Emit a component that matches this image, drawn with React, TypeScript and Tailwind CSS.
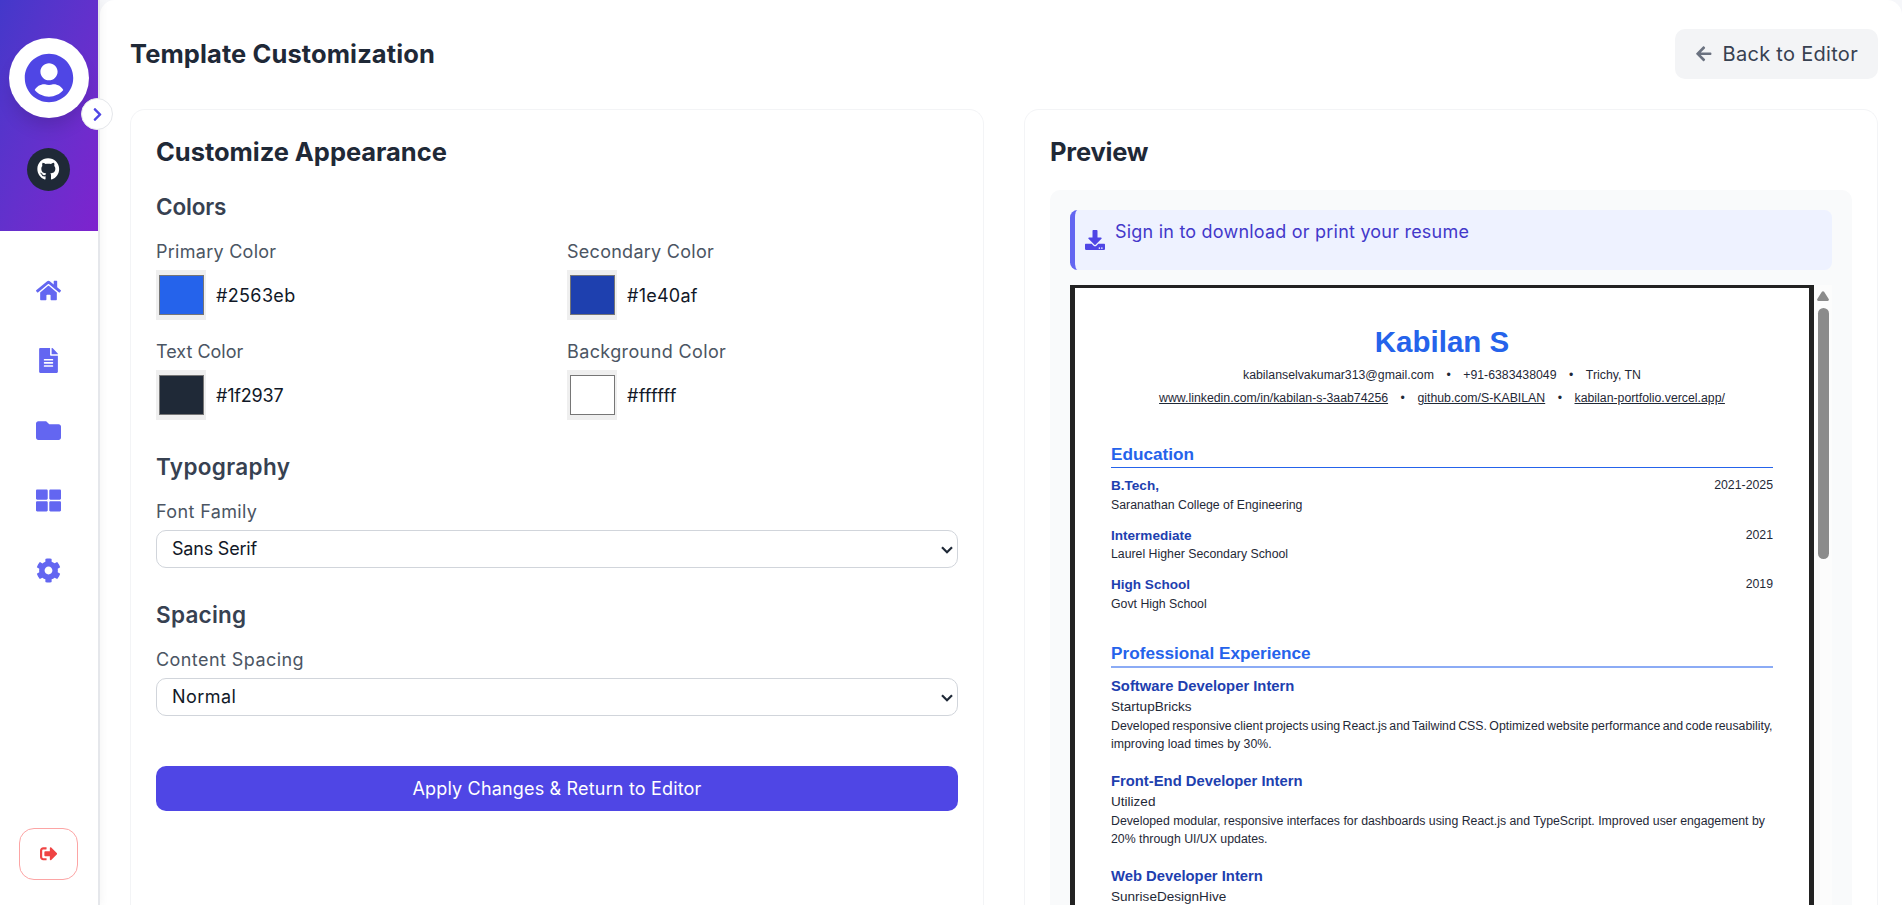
import type { ReactNode } from "react";
import {
  FaArrowLeft,
  FaChevronRight,
  FaCog,
  FaDownload,
  FaFileAlt,
  FaFolder,
  FaGithub,
  FaHome,
  FaSignOutAlt,
  FaThLarge,
  FaUserCircle,
} from "react-icons/fa";

const navIcons = [FaHome, FaFileAlt, FaFolder, FaThLarge, FaCog];

const swatches = [
  { label: "Primary Color", value: "#2563eb", fill: "bg-[#2563eb]", lt: "tracking-[0.27px]", vt: "tracking-[0.35px]" },
  { label: "Secondary Color", value: "#1e40af", fill: "bg-[#1e40af]", lt: "tracking-[0.27px]", vt: "tracking-[0.25px]" },
  { label: "Text Color", value: "#1f2937", fill: "bg-[#1f2937]", lt: "tracking-[0px]", vt: "tracking-[-0.2px]" },
  { label: "Background Color", value: "#ffffff", fill: "bg-white", lt: "tracking-[0.38px]", vt: "tracking-[0.25px]" },
];

const education = [
  { title: "B.Tech,", school: "Saranathan College of Engineering", date: "2021-2025", row: "h-[19px] leading-[19px]" },
  { title: "Intermediate", school: "Laurel Higher Secondary School", date: "2021", row: "h-[18px] leading-[16px]" },
  { title: "High School", school: "Govt High School", date: "2019", row: "h-[19px] leading-[19px]" },
];

const jobs = [
  {
    title: "Software Developer Intern",
    company: "StartupBricks",
    lines: [
      "Developed responsive client projects using React.js and Tailwind CSS. Optimized website performance and code reusability,",
      "improving load times by 30%.",
    ],
    spacing: "[word-spacing:-1px]",
  },
  {
    title: "Front-End Developer Intern",
    company: "Utilized",
    lines: [
      "Developed modular, responsive interfaces for dashboards using React.js and TypeScript. Improved user engagement by",
      "20% through UI/UX updates.",
    ],
    spacing: "",
  },
  { title: "Web Developer Intern", company: "SunriseDesignHive", lines: [], spacing: "" },
];

function Sidebar() {
  return (
    <aside className="relative z-10 flex w-[98px] shrink-0 flex-col items-center bg-white shadow-[2px_0_0_#e5e7eb,4px_0_8px_rgba(0,0,0,0.04)]">
      <div className="flex h-[231px] w-full flex-col items-center bg-linear-to-br from-[#4338ca] to-[#7e22ce] pt-[38px]">
        <div className="flex size-20 items-center justify-center rounded-full bg-white shadow-[0_12px_18px_-4px_rgba(0,0,0,0.14)]">
          <FaUserCircle className="size-[50px] text-[#4f46e5]" />
        </div>
        <div className="mt-[30px] mr-[1px] flex size-[43px] items-center justify-center rounded-full bg-[#1f2937]">
          <FaGithub className="size-[22.5px] text-white" />
        </div>
      </div>
      <button className="absolute top-[98px] left-[81px] flex size-8 items-center justify-center rounded-full border border-[#e5e7eb] bg-white">
        <FaChevronRight className="ml-px size-[15px] text-[#4f46e5]" />
      </button>
      <nav className="mt-[46.5px] mr-[1px] flex flex-col gap-[45px]">
        {navIcons.map((Icon, i) => (
          <Icon key={i} className="size-[25px] text-[#6366f1]" />
        ))}
      </nav>
      <button className="mt-auto mr-[1px] mb-[25px] flex h-[52px] w-[59px] items-center justify-center rounded-[15px] border border-[#fca5a5]">
        <FaSignOutAlt className="size-[17.5px] text-[#ef4444]" />
      </button>
    </aside>
  );
}

function SelectBox({ value, track }: { value: string; track: string }) {
  return (
    <div className="flex h-[38px] items-center justify-between rounded-[10px] border border-[#d1d5db] bg-white pr-[4px] pl-[15px] text-[18px] text-[#111827]">
      <span className={`leading-[36px] ${track}`}>{value}</span>
      <svg className="mt-px h-[8px] w-[12px]" viewBox="0 0 12 8" fill="none" stroke="#1f2937" strokeWidth="2.2">
        <path d="M1 1.2 6 6.2 11 1.2" />
      </svg>
    </div>
  );
}

function SectionTitle({ children, className }: { children: ReactNode; className: string }) {
  return <h3 className={`mb-4 h-[33px] text-[22.5px] leading-[34px] font-semibold text-[#374151] ${className}`}>{children}</h3>;
}

function Separator() {
  return <span className="mx-[12.5px]">•</span>;
}

function Resume() {
  return (
    <div className="min-w-0 flex-1 border-x-[5px] border-t-[3px] border-[#222222] bg-white px-9 pt-[33px] font-['Liberation_Sans',Arial,sans-serif] text-[12.3px] text-[#1f2937]">
      <div className="text-center">
        <h1 className="h-[43px] text-[29.5px] leading-[42px] font-bold text-[#2563eb]">Kabilan S</h1>
        <div className="flex h-[23px] justify-center leading-[23px]">
          <span>kabilanselvakumar313@gmail.com</span>
          <Separator />
          <span>+91-6383438049</span>
          <Separator />
          <span>Trichy, TN</span>
        </div>
        <div className="flex h-[23px] justify-center leading-[23px]">
          <span className="underline">www.linkedin.com/in/kabilan-s-3aab74256</span>
          <Separator />
          <span className="underline">github.com/S-KABILAN</span>
          <Separator />
          <span className="underline">kabilan-portfolio.vercel.app/</span>
        </div>
      </div>

      <section className="mt-8">
        <h2 className="h-[26px] border-b border-[#2563eb] text-[17.2px] leading-[24px] font-bold text-[#2563eb]">Education</h2>
        <div className="mt-2 flex flex-col gap-[11px]">
          {education.map((e) => (
            <div key={e.title}>
              <div className="flex h-5 justify-between leading-[20px]">
                <span className="text-[13.55px] font-bold text-[#1e40af]">{e.title}</span>
                <span className="leading-[19px]">{e.date}</span>
              </div>
              <div className={e.row}>{e.school}</div>
            </div>
          ))}
        </div>
      </section>

      <section className="mt-[27px]">
        <h2 className="h-[27px] border-b-2 border-[#8babf5] text-[17.2px] leading-[24px] font-bold text-[#2563eb]">
          Professional Experience
        </h2>
        <div className="mt-2 flex flex-col gap-[18px]">
          {jobs.map((j) => (
            <div key={j.title}>
              <div className="h-5 text-[14.8px] leading-[20px] font-bold text-[#1e40af]">{j.title}</div>
              <div className="h-[21px] text-[13.55px] leading-[21px]">{j.company}</div>
              {j.lines.map((line, i) => (
                <p key={line} className={`h-[18px] leading-[18px] whitespace-nowrap ${i === 0 ? j.spacing : ""}`}>
                  {line}
                </p>
              ))}
            </div>
          ))}
        </div>
      </section>
    </div>
  );
}

export default function App() {
  return (
    <div className="flex h-[905px] w-full overflow-hidden bg-[#f6f7fa] font-['Inter',sans-serif]">
      <Sidebar />
      <main className="ml-[2px] flex min-w-0 flex-1 flex-col rounded-t-[15px] bg-white pr-6 pl-[30px]">
        <header className="flex h-[109px] items-start justify-between pt-[29px]">
          <h1 className="text-[25.5px] leading-[50px] font-bold tracking-[0.1px] text-[#1f2937]">Template Customization</h1>
          <button className="flex h-[50px] w-[203px] items-center rounded-[10px] bg-[#f3f4f6] pl-5 text-[20px] text-[#374151]">
            <FaArrowLeft className="mr-[10px] size-[17.5px] text-[#6b7280]" />
            <span className="tracking-[0.3px]">Back to Editor</span>
          </button>
        </header>

        <div className="grid min-h-0 flex-1 grid-cols-2 gap-10">
          <section className="rounded-t-[15px] border border-b-0 border-[#f3f4f6] p-[25px]">
            <h2 className="mb-5 h-[35px] text-[25.5px] leading-[34px] font-bold tracking-[-0.04px] text-[#1f2937]">
              Customize Appearance
            </h2>
            <SectionTitle className="tracking-[-0.15px]">Colors</SectionTitle>
            <div className="grid grid-cols-2 gap-x-5 gap-y-[19px]">
              {swatches.map((s) => (
                <div key={s.label} className="text-[18px]">
                  <div className={`mb-[6px] h-[25px] leading-[25px] text-[#4b5563] ${s.lt}`}>{s.label}</div>
                  <div className="flex items-center">
                    <span className="mr-[10px] size-[50px] bg-[#efefef] py-[5px] pr-[2px] pl-[3px]">
                      <span className={`block size-full border border-[#767676] ${s.fill}`} />
                    </span>
                    <span className={`text-[#111827] ${s.vt}`}>{s.value}</span>
                  </div>
                </div>
              ))}
            </div>

            <div className="mt-[30px]">
              <SectionTitle className="tracking-[0.35px]">Typography</SectionTitle>
              <div className="mb-[6px] h-[25px] text-[18px] leading-[25px] tracking-[0.37px] text-[#4b5563]">Font Family</div>
              <SelectBox value="Sans Serif" track="tracking-[-0.2px]" />
            </div>

            <div className="mt-[30px]">
              <SectionTitle className="tracking-[0.25px]">Spacing</SectionTitle>
              <div className="mb-[6px] h-[25px] text-[18px] leading-[25px] tracking-[0.43px] text-[#4b5563]">Content Spacing</div>
              <SelectBox value="Normal" track="tracking-[0.45px]" />
            </div>

            <button className="mt-[50px] h-[45px] w-full rounded-[10px] bg-[#4f46e5] text-[18px] tracking-[0.17px] text-white">
              Apply Changes &amp; Return to Editor
            </button>
          </section>

          <section className="flex min-h-0 flex-col rounded-t-[15px] border border-b-0 border-[#f3f4f6] px-[25px] pt-[25px]">
            <h2 className="mb-5 h-[35px] text-[25.5px] leading-[34px] font-bold tracking-[-0.2px] text-[#1f2937]">Preview</h2>
            <div className="flex min-h-0 flex-1 flex-col rounded-t-[10px] bg-[#f9fafb] px-5 pt-5">
              <div className="mb-[15px] flex h-[60px] shrink-0 rounded-[7.5px] border-l-[5px] border-[#6366f1] bg-[#eef2ff] pl-[10px]">
                <FaDownload className="mt-5 mr-[10px] size-5 text-[#4f46e5]" />
                <p className="pt-[9px] text-[18px] leading-[25px] tracking-[0.21px] text-[#4338ca]">
                  Sign in to download or print your resume
                </p>
              </div>
              <div className="flex min-h-0 flex-1 overflow-hidden">
                <Resume />
                <div className="flex w-[18px] shrink-0 flex-col items-center bg-[#fcfcfc] pt-[6px]">
                  <svg className="mb-[7px] h-[10px] w-3" viewBox="0 0 12 10" fill="#8b8b8b">
                    <path d="M4.9.8a1.3 1.3 0 0 1 2.2 0l4.6 7.1a1.3 1.3 0 0 1-1.1 2H1.4a1.3 1.3 0 0 1-1.1-2z" />
                  </svg>
                  <div className="h-[251px] w-[11px] rounded-full bg-[#8b8b8b]" />
                </div>
              </div>
            </div>
          </section>
        </div>
      </main>
    </div>
  );
}
